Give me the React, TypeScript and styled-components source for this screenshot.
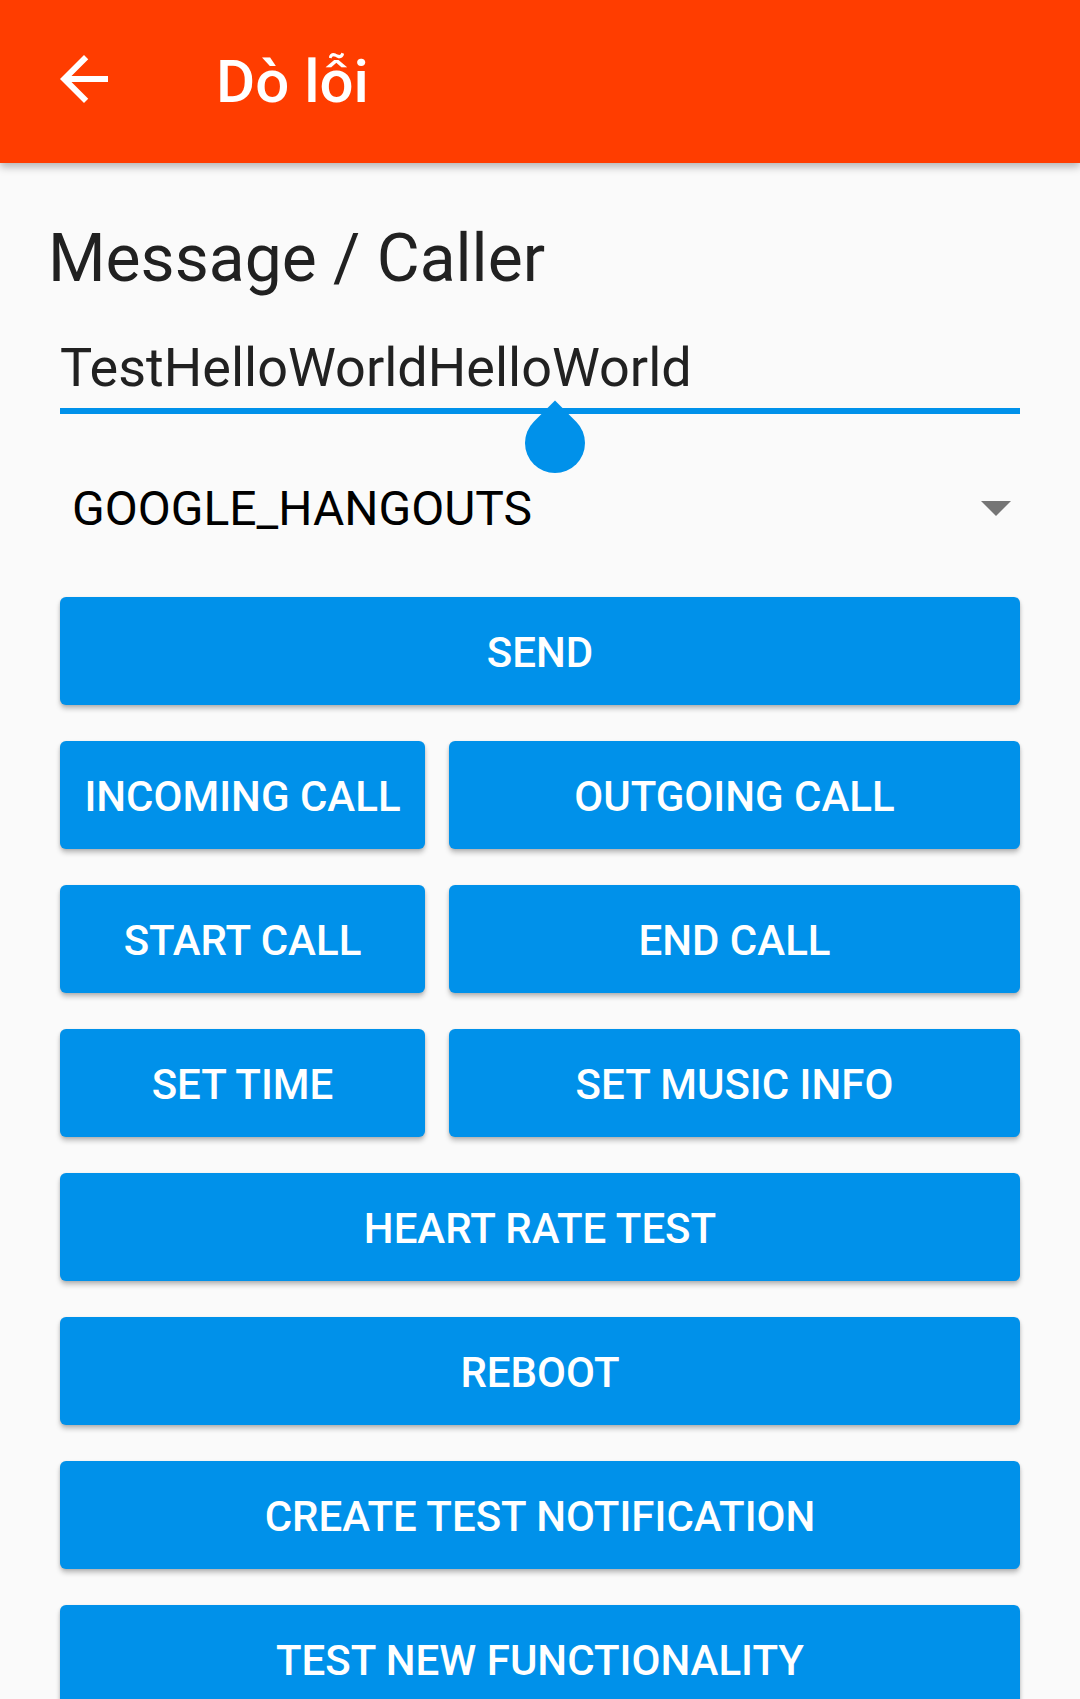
import React from "react";
import styled, { createGlobalStyle } from "styled-components";

const Global = createGlobalStyle`
  html, body {
    margin: 0;
    padding: 0;
    background: #fafafa;
    font-family: Roboto, "Noto Sans", "Liberation Sans", sans-serif;
  }
  * { box-sizing: border-box; }
`;

const Page = styled.div`
  min-height: 1699px;
  background: #fafafa;
  overflow: hidden;
`;

const Toolbar = styled.header`
  position: relative;
  z-index: 2;
  height: 163px;
  background: #ff3d00;
  display: flex;
  align-items: center;
  padding-left: 48px;
  box-shadow: 0 4px 8px rgba(0, 0, 0, 0.28);
`;

const NavIcon = styled.svg`
  width: 72px;
  height: 72px;
  margin-top: -5px;
  flex: none;
  fill: #ffffff;
`;

const Title = styled.h1`
  margin: 0 0 0 96px;
  font-family: Roboto, "Noto Sans", sans-serif;
  font-weight: 500;
  font-size: 60px;
  line-height: 60px;
  color: #ffffff;
`;

const Content = styled.main`
  padding: 56px 60px 60px 60px;
  display: flex;
  flex-direction: column;
`;

const Heading = styled.h2`
  margin: 0 0 0 -12px;
  font-weight: 400;
  font-size: 66px;
  line-height: 80px;
  color: #212121;
`;

const Field = styled.div`
  position: relative;
  margin-top: 37px;
  padding-bottom: 8px;
  border-bottom: 6px solid #0091ea;
  font-size: 54px;
  line-height: 64px;
  color: #212121;
`;

const Handle = styled.span`
  position: absolute;
  left: 465px;
  top: 77px;
  width: 60px;
  height: 60px;
  background: #0091ea;
  border-radius: 0 50% 50% 50%;
  transform: rotate(45deg);
`;

const Spinner = styled.div`
  margin-top: 67px;
  display: flex;
  align-items: center;
  justify-content: space-between;
  padding-left: 12px;
  padding-right: 9px;
  height: 56px;
`;

const SpinnerText = styled.span`
  font-size: 48px;
  line-height: 56px;
  color: #000000;
`;

const Caret = styled.span`
  width: 0;
  height: 0;
  margin-top: -1px;
  border-left: 15px solid transparent;
  border-right: 15px solid transparent;
  border-top: 15px solid #757575;
`;

const Buttons = styled.div`
  margin-top: 60px;
  display: flex;
  flex-direction: column;
  gap: 36px;
`;

const Row = styled.div`
  display: grid;
  grid-template-columns: 365px 1fr;
  gap: 24px;
`;

const Button = styled.button`
  height: 108px;
  width: 100%;
  border: none;
  border-radius: 6px;
  background: #0091ea;
  color: #ffffff;
  font-family: Roboto, "Noto Sans", sans-serif;
  font-weight: 500;
  font-size: 42px;
  line-height: 48px;
  text-transform: uppercase;
  white-space: nowrap;
  padding: 3px 0 0 0;
  box-shadow: 0 4px 5px rgba(0, 0, 0, 0.22), 0 1px 3px rgba(0, 0, 0, 0.12);
`;

export default function App() {
  return (
    <Page>
      <Global />
      <Toolbar>
        <NavIcon viewBox="0 0 24 24">
          <path d="M20 11H7.83l5.59-5.59L12 4l-8 8 8 8 1.41-1.41L7.83 13H20v-2z" />
        </NavIcon>
        <Title>Dò lỗi</Title>
      </Toolbar>
      <Content>
        <Heading>Message / Caller</Heading>
        <Field>
          TestHelloWorldHelloWorld
          <Handle />
        </Field>
        <Spinner>
          <SpinnerText>GOOGLE_HANGOUTS</SpinnerText>
          <Caret />
        </Spinner>
        <Buttons>
          <Button>Send</Button>
          <Row>
            <Button>Incoming call</Button>
            <Button>Outgoing call</Button>
          </Row>
          <Row>
            <Button>Start call</Button>
            <Button>End call</Button>
          </Row>
          <Row>
            <Button>Set time</Button>
            <Button>Set music info</Button>
          </Row>
          <Button>Heart rate test</Button>
          <Button>Reboot</Button>
          <Button>Create test notification</Button>
          <Button>Test new functionality</Button>
        </Buttons>
      </Content>
    </Page>
  );
}
